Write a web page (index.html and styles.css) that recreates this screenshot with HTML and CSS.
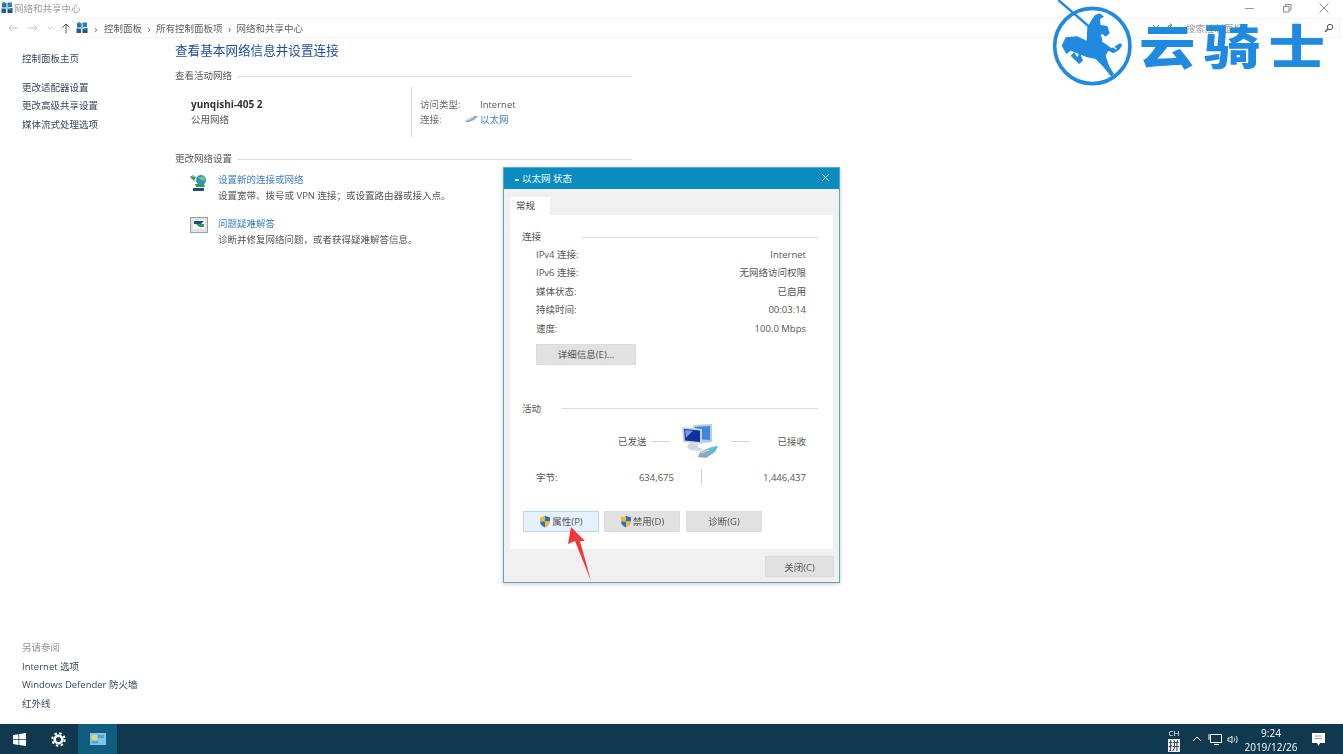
FILE: index.html
```html
<!DOCTYPE html>
<html lang="zh-CN">
<head>
<meta charset="utf-8">
<title>网络和共享中心</title>
<link rel="stylesheet" href="styles.css">
</head>
<body>
<svg class="defs" width="0" height="0" aria-hidden="true">
  <defs>
    <symbol id="cp" viewBox="0 0 12 12">
      <rect x="1" y="1" width="4.500" height="4.500" fill="#2b6ea8"/>
      <rect x="6.500" y="0.500" width="4.500" height="4.500" fill="#2c7fc0"/>
      <rect x="0.500" y="6.500" width="4.500" height="4.500" fill="#1d5d9c"/>
      <rect x="6.500" y="6" width="5" height="5" fill="#1d4f8c"/>
      <path d="M2 0h2v2H2zM8 6h2v2H8z" fill="#4aa65a"/>
      <path d="M4 5h4v2H4z" fill="#9cc4e4"/>
    </symbol>
    <symbol id="shield" viewBox="0 0 12 13">
      <path d="M6 .5C4.500 1.600 2.800 2.100 1 2.200V6.500h5z" fill="#f2b632"/>
      <path d="M6 .5c1.500 1.100 3.200 1.600 5 1.700v4.300H6z" fill="#2a6fc0"/>
      <path d="M1 6.500h5v6C3.200 11.300 1 9.300 1 6.500z" fill="#2a6fc0"/>
      <path d="M6 6.500h5c0 2.800-2.200 4.800-5 6z" fill="#f2b632"/>
    </symbol>
  </defs>
</svg>

<div class="window">
  <header class="titlebar">
    <div class="title-left">
      <svg class="ico12"><use href="#cp"/></svg>
      <span>网络和共享中心</span>
    </div>
    <div class="winctrls">
      <svg width="12" height="12" viewBox="0 0 12 12"><path d="M1 6.500h9" stroke="#999" fill="none"/></svg>
      <svg width="12" height="12" viewBox="0 0 12 12"><path d="M2.500 4.500h5.500v5.500H2.500zM4.500 4V2.500H10V8H8.500" stroke="#888" fill="none"/></svg>
      <svg width="12" height="12" viewBox="0 0 12 12"><path d="M1.500 1.500l9 9M10.500 1.500l-9 9" stroke="#888" fill="none"/></svg>
    </div>
  </header>

  <nav class="addressbar">
    <div class="nav-btns">
      <svg width="12" height="10" viewBox="0 0 12 10"><path d="M11 5H2M5 2L2 5l3 3" stroke="#c4c4c4" fill="none"/></svg>
      <svg width="12" height="10" viewBox="0 0 12 10"><path d="M1 5h9M7 2l3 3-3 3" stroke="#c4c4c4" fill="none"/></svg>
      <svg width="6" height="10" viewBox="0 0 6 10"><path d="M1 4l2 2 2-2" stroke="#c4c4c4" fill="none"/></svg>
      <svg width="10" height="12" viewBox="0 0 10 12"><path d="M5 11.500V2M1.500 5.500L5 2l3.500 3.500" stroke="#555" fill="none"/></svg>
    </div>
    <div class="crumbs">
      <svg class="ico12"><use href="#cp"/></svg>
      <span class="sep sep-first">›</span><span>控制面板</span>
      <span class="sep">›</span><span>所有控制面板项</span>
      <span class="sep">›</span><span>网络和共享中心</span>
      <span class="addr-tools">
        <svg width="8" height="8" viewBox="0 0 8 8"><path d="M1 1l6 6M7 1L1 7" stroke="#777" fill="none"/></svg>
        <svg width="9" height="10" viewBox="0 0 9 10"><path d="M7.500 5.500A3 3 0 1 1 5 2.200M4 .5l2 1.700L4 4" stroke="#777" fill="none"/></svg>
      </span>
    </div>
    <div class="search">
      <span>搜索控制面板</span>
      <svg width="10" height="10" viewBox="0 0 10 10"><circle cx="6" cy="4" r="2.700" stroke="#555" fill="none"/><path d="M4 6L1 9" stroke="#555" stroke-width="1.500"/></svg>
    </div>
  </nav>

  <div class="main">
    <aside class="sidebar">
      <div class="side-top">
        <a class="side-link side-home">控制面板主页</a>
        <a class="side-link">更改适配器设置</a>
        <a class="side-link">更改高级共享设置</a>
        <a class="side-link">媒体流式处理选项</a>
      </div>
      <div class="side-bottom">
        <span class="side-link side-muted">另请参阅</span>
        <a class="side-link">Internet 选项</a>
        <a class="side-link">Windows Defender 防火墙</a>
        <a class="side-link">红外线</a>
      </div>
    </aside>

    <section class="content">
      <h1 class="heading">查看基本网络信息并设置连接</h1>

      <div class="sect sect-active"><span>查看活动网络</span><i class="rule"></i></div>
      <div class="network">
        <div class="net-id">
          <strong>yunqishi-405 2</strong>
          <span>公用网络</span>
        </div>
        <dl class="net-info">
          <dt>访问类型:</dt>
          <dd>Internet</dd>
          <dt>连接:</dt>
          <dd class="net-link">
            <svg class="cable" width="13" height="7" viewBox="0 0 13 7"><path d="M0 6l3-3 6-3h4L9 4 4 6z" fill="#8fa6bd"/><path d="M3 4l6-3" stroke="#e4ecf3" fill="none"/></svg>
            <a>以太网</a>
          </dd>
        </dl>
      </div>

      <div class="sect sect-change"><span>更改网络设置</span><i class="rule"></i></div>
      <div class="tasks">
        <div class="task">
          <svg class="task-ico" width="19" height="19" viewBox="0 0 19 19">
            <path d="M0 4l3-2 3 2-2 4z" fill="#3d9a4a"/>
            <circle cx="11" cy="7" r="5" fill="#2c8fd0"/>
            <path d="M8 5l5-2 3 3-3 2z" fill="#7cc27a"/>
            <path d="M5 11h9l1 3H6z" fill="#2e9e58"/>
            <path d="M3 15h11v3H3z" fill="#1e4f7c"/>
            <path d="M2 2.500h3v1H2z" fill="#bfe3f4"/>
          </svg>
          <div class="task-text">
            <a>设置新的连接或网络</a>
            <span>设置宽带、拨号或 VPN 连接；或设置路由器或接入点。</span>
          </div>
        </div>
        <div class="task">
          <svg class="task-ico" width="18" height="16" viewBox="0 0 18 16">
            <rect x=".5" y=".5" width="17" height="15" fill="#dfe3e6" stroke="#9aa0a6"/>
            <path d="M3 3h12v9H3z" fill="#f6f8f9"/>
            <path d="M4 4h10l-3 3H4z" fill="#1e4f7c"/>
            <path d="M14 7H6l3 3h5z" fill="#2e9e58"/>
          </svg>
          <div class="task-text">
            <a>问题疑难解答</a>
            <span>诊断并修复网络问题，或者获得疑难解答信息。</span>
          </div>
        </div>
      </div>
    </section>
  </div>

  <footer class="taskbar">
    <div class="tb-left">
      <span class="tb-btn">
        <svg width="13" height="13" viewBox="0 0 13 13"><path d="M0 2l5.500-.8v5H0zM6.200 1.100L13 0v6.200H6.200zM0 6.900h5.500v5L0 11zM6.200 6.900H13V13l-6.800-1z" fill="#fff"/></svg>
      </span>
      <span class="tb-btn">
        <svg width="15" height="15" viewBox="0 0 15 15"><circle cx="7.500" cy="7.500" r="3.800" fill="none" stroke="#fff" stroke-width="2.600"/><circle cx="7.500" cy="7.500" r="6.200" fill="none" stroke="#fff" stroke-width="2" stroke-dasharray="2.400 2.470"/></svg>
      </span>
      <span class="tb-btn tb-active">
        <svg width="16" height="12" viewBox="0 0 16 12"><rect width="16" height="12" fill="#7fc4ea"/><rect x="1.500" y="1.500" width="6" height="6" rx="3" fill="#e9d36a"/><path d="M8 2h6v3H8z" fill="#4ea3d8"/><path d="M2 8h6v2.500H2z" fill="#4ea3d8"/></svg>
      </span>
    </div>
    <div class="tray">
      <div class="ime"><span>CH</span><b>拼</b></div>
      <svg width="10" height="6" viewBox="0 0 10 6"><path d="M1 5l4-4 4 4" stroke="#fff" fill="none"/></svg>
      <svg width="14" height="13" viewBox="0 0 14 13"><path d="M2.500 1.500h11v8h-11zM6 11.500h5M1 1v6" stroke="#fff" fill="none"/></svg>
      <svg width="12" height="11" viewBox="0 0 12 11"><path d="M1 4h2l2-2v7L3 7H1z" fill="none" stroke="#fff" stroke-width=".9"/><path d="M7 3.500c.8 1 .8 3 0 4M9 2c1.500 2 1.500 5 0 7" fill="none" stroke="#fff" stroke-width=".9"/></svg>
      <div class="clock"><span>9:24</span><span>2019/12/26</span></div>
      <svg class="notify" width="13" height="13" viewBox="0 0 13 13"><path d="M0 0h13v10H8l-1.500 3L5 10H0z" fill="#fff"/><path d="M3 3h7M3 5.500h7" stroke="#889" stroke-width=".8"/></svg>
    </div>
  </footer>
</div>

<div class="dialog">
  <div class="dlg-title">
    <span class="dlg-name"><i class="dlg-mark"></i>以太网 状态</span>
    <svg width="9" height="9" viewBox="0 0 9 9"><path d="M1 1l7 7M8 1L1 8" stroke="#e8f5fb" fill="none"/></svg>
  </div>
  <div class="dlg-body">
    <div class="tab">常规</div>
    <div class="panel">
      <div class="grp"><span>连接</span><i class="rule rule-conn"></i></div>
      <div class="rows">
        <div class="row"><span>IPv4 连接:</span><span>Internet</span></div>
        <div class="row"><span>IPv6 连接:</span><span>无网络访问权限</span></div>
        <div class="row"><span>媒体状态:</span><span>已启用</span></div>
        <div class="row"><span>持续时间:</span><span>00:03:14</span></div>
        <div class="row"><span>速度:</span><span>100.0 Mbps</span></div>
      </div>
      <button class="btn btn-detail">详细信息(E)...</button>

      <div class="grp grp-act"><span>活动</span><i class="rule rule-act"></i></div>
      <div class="transfer">
        <span>已发送</span>
        <i class="dash"></i>
        <svg class="pcs" width="38" height="37" viewBox="0 0 38 37">
          <path d="M11 2l19-1v18l-8 1-11-1z" fill="#b4cbe0"/>
          <path d="M13 4l15-1v14l-15-1z" fill="#3f86d8"/>
          <path d="M0 4l20 2v15L1 19z" fill="#c5d3e2"/>
          <path d="M2 6l16 1.500V19L3 17.500z" fill="#12309c"/>
          <path d="M3 7l8 .7-7 7z" fill="#6f9be0"/>
          <path d="M7 20l9 1v3l5 2-3 2-10-1-3-3z" fill="#d2d7dc"/>
          <path d="M16 34l2-5 9-4 9-2-3 6-9 6z" fill="#8aa9c2"/>
          <path d="M27 25l9-2-3 5-6 2z" fill="#56c0d8"/>
          <path d="M19 30l8-3" stroke="#e2ebf2" fill="none"/>
        </svg>
        <i class="dash dash-right"></i>
        <span class="recv">已接收</span>
      </div>
      <div class="bytes">
        <div class="bytes-sent"><span>字节:</span><span>634,675</span></div>
        <i class="vbar"></i>
        <span class="bytes-recv">1,446,437</span>
      </div>
      <div class="actions">
        <button class="btn btn-hot"><svg class="shield"><use href="#shield"/></svg>属性(P)</button>
        <button class="btn"><svg class="shield"><use href="#shield"/></svg>禁用(D)</button>
        <button class="btn">诊断(G)</button>
      </div>
    </div>
    <div class="dlg-foot"><button class="btn btn-close">关闭(C)</button></div>
  </div>
</div>

<svg class="arrow" width="30" height="58" viewBox="0 0 30 58">
  <path d="M3 1l14 14h-5l11 40-16-40-7 3z" fill="#f0383a"/>
</svg>

<div class="brand">
  <svg class="brand-mark" width="110" height="90" viewBox="0 0 330 270">
    <circle cx="142" cy="138" r="113" fill="#fff" fill-opacity=".5" stroke="#2089e0" stroke-width="11"/>
    <path d="M150 45l15-5 12 10-12 8 2 17 20 3 7 22-12 10-13-10 3 25 28 20 25-15 7 5-10 15-17 10-15-8-8 15 10 30 15 25-8 8-27-33-20-20-25-5-20-8 7 18-12 10-25-25 10-10 10 15 5-10-25-10-13 10-14-25 12-25 35-3 28 13 2-40 13-22z" fill="#2089e0"/>
    <path d="M40 0l125 108" stroke="#2089e0" stroke-width="7" fill="none"/>
    <path d="M168 106l46 42" stroke="#fff" stroke-width="4" fill="none"/>
  </svg>
  <span class="brand-name">云骑士</span>
</div>
</body>
</html>
```

FILE: styles.css
```css
* { box-sizing: border-box; }

html, body {
  margin: 0;
  height: 100%;
  overflow: hidden;
  background: #fff;
}

body {
  position: relative;
  font-family: "Open Sans", "Noto Sans CJK SC", sans-serif;
  font-size: 9.5px;
  color: #4a4f55;
}

.defs { position: absolute; }
.ico12 { width: 12px; height: 12px; flex: none; }
a { color: inherit; text-decoration: none; }
i { display: block; font-style: normal; }

.window {
  width: 1343px;
  height: 754px;
  display: flex;
  flex-direction: column;
  filter: blur(.3px);
}

/* Title bar */
.titlebar {
  height: 18px;
  flex: none;
  display: flex;
  justify-content: space-between;
  align-items: center;
  padding: 0 13px 2px 1px;
  color: #9a9a9a;
}
.title-left { display: flex; align-items: center; gap: 1px; }
.winctrls { display: flex; gap: 25px; }

/* Address bar */
.addressbar {
  height: 20px;
  flex: none;
  display: flex;
  align-items: center;
  padding: 0 3px 0 7px;
}
.nav-btns { display: flex; align-items: center; gap: 8px; width: 69px; }
.crumbs {
  flex: 1;
  height: 100%;
  display: flex;
  align-items: center;
  color: #5a5f66;
  border-top: 1px solid #f4f4f4;
  border-bottom: 1px solid #f4f4f4;
}
.sep { width: 14px; text-align: center; color: #777; font-size: 11px; line-height: 1; }
.sep-first { width: 16px; }
.addr-tools { margin-left: auto; display: flex; align-items: center; gap: 6px; padding-right: 5px; }
.search {
  width: 160px;
  height: 100%;
  display: flex;
  justify-content: space-between;
  align-items: center;
  padding: 0 5px;
  color: #9a9a9a;
  border: 1px solid #f2f2f2;
}

/* Main area */
.main { flex: 1; min-height: 0; display: flex; }

.sidebar {
  width: 175px;
  flex: none;
  padding: 12px 0 11px 22px;
  display: flex;
  flex-direction: column;
  justify-content: space-between;
}
.side-link { display: block; line-height: 18.5px; color: #35465e; }
.side-home { margin-bottom: 10px; }
.side-muted { color: #8d9296; }

.content { width: 457px; flex: none; padding-top: 5px; }

.heading {
  margin: 0;
  font-size: 12.6px;
  font-weight: 400;
  line-height: 16px;
  color: #1d4f9e;
}

.sect {
  display: flex;
  align-items: center;
  gap: 5px;
  line-height: 16px;
  color: #555;
}
.sect .rule { flex: 1; }
.rule { height: 1px; background: #d9dde0; }
.sect-active { margin-top: 9px; }
.sect-change { margin-top: 14px; }

.network { height: 50px; margin-top: 3px; display: flex; }
.net-id {
  width: 236px;
  padding: 10px 0 0 16px;
  display: flex;
  flex-direction: column;
  line-height: 15px;
  color: #555;
}
.net-id strong { font-weight: 700; color: #333; font-size: 10px; }

.net-info {
  margin: 0;
  padding: 10px 0 0 8px;
  border-left: 1px solid #d9dde0;
  display: grid;
  grid-template-columns: 60px auto;
  grid-auto-rows: 15px;
  line-height: 15px;
  align-content: start;
}
.net-info dt { color: #66696d; }
.net-info dd { margin: 0; color: #555; }
.net-link { position: relative; color: #3b80c4 !important; }
.cable { position: absolute; left: -15px; top: 4px; }

.tasks { margin-top: 5px; padding-left: 15px; display: flex; flex-direction: column; gap: 12px; }
.task { display: flex; gap: 9px; }
.task-ico { flex: none; margin-top: 1px; }
.task + .task .task-ico { margin-right: 1px; }
.task-text { display: flex; flex-direction: column; line-height: 16px; color: #555; }
.task-text a { color: #3b80c4; }

/* Taskbar */
.taskbar {
  height: 30px;
  flex: none;
  background: #10394f;
  display: flex;
  justify-content: space-between;
  color: #fff;
}
.tb-left { display: flex; }
.tb-btn { width: 39px; display: flex; align-items: center; justify-content: center; }
.tb-active { background: #115d80; }
.tray { display: flex; align-items: center; padding-right: 18px; }
.tray > svg:nth-of-type(1) { margin-left: 12px; }
.tray > svg:nth-of-type(2) { margin-left: 6px; }
.tray > svg:nth-of-type(3) { margin-left: 5px; }
.ime { display: flex; flex-direction: column; align-items: center; font-size: 8px; line-height: 13px; }
.ime b { font-weight: 400; font-size: 11px; background: #e8edf0; color: #223; width: 12px; line-height: 13px; text-align: center; }
.clock {
  margin-left: 3px;
  padding-top: 2px;
  width: 58px;
  display: flex;
  flex-direction: column;
  align-items: center;
  line-height: 14px;
  font-size: 10px;
}
.notify { margin-left: 12px; }

/* Dialog window */
.dialog {
  position: absolute;
  left: 503px;
  top: 167px;
  width: 337px;
  height: 416px;
  border: 1px solid #5aa7c0;
  background: #f0f0f0;
  display: flex;
  flex-direction: column;
  box-shadow: 0 1px 4px rgba(0, 0, 0, .22);
  filter: blur(.3px);
}
.dlg-title {
  height: 21px;
  flex: none;
  background: #0a8cc0;
  color: #f2fafd;
  display: flex;
  justify-content: space-between;
  align-items: center;
  padding: 0 9px 2px 11px;
}
.dlg-name { display: flex; align-items: center; gap: 3px; }
.dlg-mark { width: 4px; height: 2px; background: #cfe9f4; margin-top: 5px; }
.dlg-body { flex: 1; padding: 8px 6px 0; display: flex; flex-direction: column; }
.tab {
  width: 40px;
  height: 18px;
  background: #fff;
  line-height: 17px;
  padding-left: 6px;
  color: #444;
  flex: none;
}
.panel {
  height: 334px;
  flex: none;
  background: #fff;
  padding: 14px 15px 0 12px;
  display: flex;
  flex-direction: column;
  align-items: stretch;
}
.grp { display: flex; align-items: center; line-height: 16px; color: #555; }
.grp .rule { flex: 1; }
.rule-conn { margin-left: 41px; }
.rule-act { margin-left: 21px; }
.grp-act { margin-top: 36px; }

.rows { padding: .5px 12px 0 14px; }
.row { display: flex; justify-content: space-between; line-height: 18.5px; color: #555; }

.btn {
  font: inherit;
  color: #555;
  background: #e1e1e1;
  border: 1px solid #dcdcdc;
  border-radius: 0;
  padding: 0;
  height: 21px;
  display: flex;
  align-items: center;
  justify-content: center;
  gap: 1px;
}
.btn-detail { width: 100px; margin: 5.5px 0 0 14px; }

.transfer {
  margin-top: 6px;
  height: 37px;
  display: flex;
  align-items: center;
  padding-right: 12px;
  color: #555;
}
.transfer > span:first-child { margin-left: auto; }
.dash { width: 19px; height: 1px; background: #d4d4d4; margin-left: 5px; }
.pcs { margin-left: 12px; flex: none; }
.dash-right { margin-left: 11px; }
.recv { margin-left: 27px; }

.bytes {
  margin-top: 9px;
  height: 17px;
  display: grid;
  grid-template-columns: 138px 54px 78px;
  margin-left: 14px;
  line-height: 17px;
  color: #555;
}
.bytes-sent { display: flex; justify-content: space-between; }
.vbar { width: 1px; height: 16px; background: #cfcfcf; justify-self: center; }
.bytes-recv { text-align: right; }

.actions { margin: 25px 0 0 1px; display: flex; gap: 5px; }
.actions .btn { width: 76px; }
.actions .btn:last-child { margin-left: 1px; }
.btn-hot { background: #e5f1fb; border-color: #b6d7ef; }
.shield { width: 12px; height: 13px; }

.dlg-foot { display: flex; justify-content: flex-end; margin-right: -1px; padding-top: 7px; }
.btn-close { width: 69px; }

/* Annotation arrow over the dialog */
.arrow { position: absolute; left: 568px; top: 526px; }

/* Watermark over the page */
.brand {
  position: absolute;
  left: 1045px;
  top: 0;
  display: flex;
  align-items: center;
  height: 90px;
}
.brand-name {
  margin-left: -16px;
  margin-top: -3px;
  font-family: "Noto Sans CJK SC", sans-serif;
  font-weight: 900;
  font-size: 47px;
  letter-spacing: 7px;
  line-height: 1;
  color: #2089e0;
  white-space: nowrap;
  transform: scaleX(1.2);
  transform-origin: left center;
}
```
